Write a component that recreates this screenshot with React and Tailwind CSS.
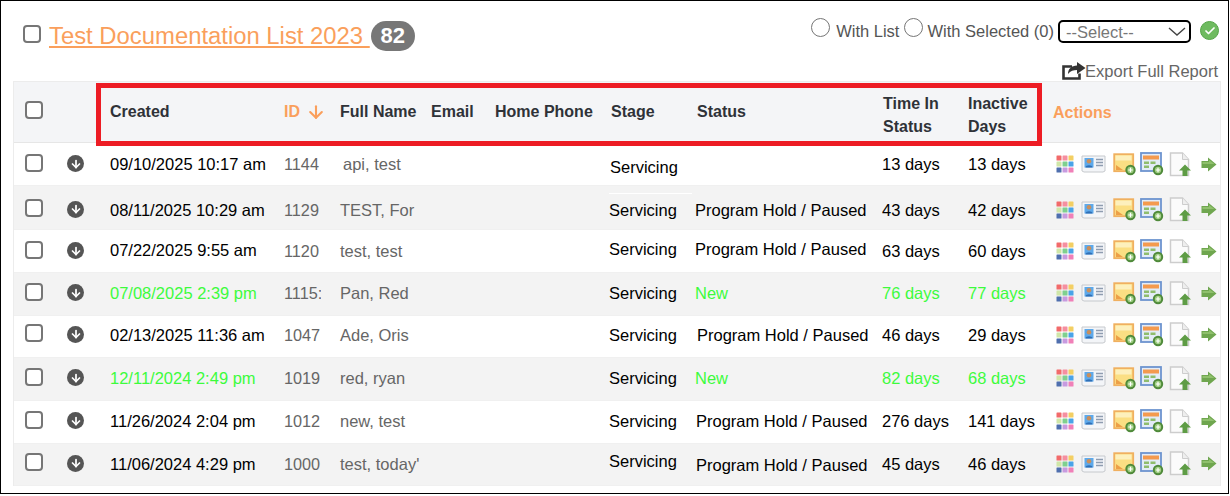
import { ArrowDown, Check } from "lucide-react";

const rows = [
  { created: "09/10/2025 10:17 am", id: "1144", name: "api, test", status: "", time: "13 days", inactive: "13 days", h: "h-[43px]", nameCls: "pl-[3px]", stageCls: "pl-px pt-[6px]" },
  { created: "08/11/2025 10:29 am", id: "1129", name: "TEST, For", status: "Program Hold / Paused", time: "43 days", inactive: "42 days", h: "h-[44px] pt-[4px]", alt: true, mark: true },
  { created: "07/22/2025 9:55 am", id: "1120", name: "test, test", status: "Program Hold / Paused", time: "63 days", inactive: "60 days", h: "h-[43px]", statusCls: "pb-[4px]", stageCls: "pb-[4px]", dateCls: "pb-[2px]" },
  { created: "07/08/2025 2:39 pm", id: "1115:", name: "Pan, Red", status: "New", time: "76 days", inactive: "77 days", h: "h-[43px] pb-[2px]", alt: true, green: true },
  { created: "02/13/2025 11:36 am", id: "1047", name: "Ade, Oris", status: "Program Hold / Paused", time: "46 days", inactive: "29 days", h: "h-[42px] pb-[4px]", statusCls: "pl-[2px]" },
  { created: "12/11/2024 2:49 pm", id: "1019", name: "red, ryan", status: "New", time: "82 days", inactive: "68 days", h: "h-[43px] pb-[2px]", alt: true, green: true },
  { created: "11/26/2024 2:04 pm", id: "1012", name: "new, test", status: "Program Hold / Paused", time: "276 days", inactive: "141 days", h: "h-[43px] pb-[2px]", statusCls: "pl-px" },
  { created: "11/06/2024 4:29 pm", id: "1000", name: "test, today'", status: "Program Hold / Paused", time: "45 days", inactive: "46 days", h: "h-[42px] pb-[2px]", alt: true, statusCls: "pl-px pt-[2px]", stageCls: "pb-[6px]" },
];

function Box({ className = "" }) {
  return <span className={`block h-[18px] w-[18px] rounded-[4px] border-2 border-[#767676] bg-white ${className}`} />;
}

function Radio() {
  return <span className="block h-[19px] w-[19px] rounded-full border-[1.5px] border-[#767676] bg-white" />;
}

function ColorGrid() {
  const colors = ["#f26a6a", "#f58fa0", "#f3cf63", "#cfe6a8", "#7fd08f", "#4aa3e8", "#4f6fae", "#c79be0", "#f080b8"];
  return (
    <svg width="18" height="18" viewBox="0 0 18 18" className="blur-[0.4px]">
      {colors.map((c, i) => (
        <rect key={c} x={0.5 + (i % 3) * 6} y={0.5 + Math.floor(i / 3) * 6} width="5" height="5" rx="0.6" fill={c} />
      ))}
    </svg>
  );
}

function IdCard() {
  return (
    <svg width="25" height="18" viewBox="0 0 25 18" className="blur-[0.4px]">
      <path d="M1 1h23v15l-2 1H3l-2-1z" fill="#f3f5f8" stroke="#c6c9cd" />
      <rect x="3.5" y="3" width="9" height="9.5" fill="#5ea9ea" />
      <circle cx="8" cy="6.3" r="2.3" fill="#c98f5c" />
      <path d="M4.5 12.5c0-3 7-3 7 0z" fill="#2f6fb5" />
      <path d="M15 4.5h7M15 7.5h7M15 10.5h7" stroke="#8f9db0" strokeWidth="1.4" />
    </svg>
  );
}

function PlusDot({ cx, cy }) {
  return (
    <g>
      <circle cx={cx} cy={cy} r="5.2" fill="#4f8a3a" />
      <circle cx={cx} cy={cy} r="3.2" fill="#9ccc7f" />
      <path d={`M${cx - 2.2} ${cy}h4.4M${cx} ${cy - 2.2}v4.4`} stroke="#fff" strokeWidth="1.2" />
    </g>
  );
}

function NoteAdd() {
  return (
    <svg width="24" height="23" viewBox="0 0 24 23" className="blur-[0.4px]">
      <rect x="1.2" y="1.2" width="19" height="17" fill="#fbdf83" stroke="#f0b060" strokeWidth="1.8" />
      <rect x="2.5" y="2.5" width="16" height="5" fill="#fdf0bd" />
      <path d="M3 12l7 5H3z" fill="#ec9f48" />
      <PlusDot cx={17.5} cy={17} />
    </svg>
  );
}

function TableAdd() {
  return (
    <svg width="24" height="24" viewBox="0 0 24 24" className="blur-[0.4px]">
      <rect x="1" y="1" width="20" height="18" fill="#e3ecf8" stroke="#6d94cf" strokeWidth="1.8" />
      <rect x="3" y="3.5" width="16" height="4" fill="#f49a4e" />
      <path d="M4 9.5h5v2.5H4zM10.5 9.5h5v2.5h-5zM4 13.5h5V16H4z" fill="#8fbd6d" />
      <PlusDot cx={18} cy={18} />
    </svg>
  );
}

function FileUp() {
  return (
    <svg width="23" height="25" viewBox="0 0 23 25" className="blur-[0.4px]">
      <path d="M1.5 1h12l6 6.5V23.5h-18z" fill="#fbfbfb" stroke="#cdcdcd" strokeWidth="1.5" />
      <path d="M13.5 1v6.5h6" fill="#eee" stroke="#cdcdcd" strokeWidth="1" />
      <path d="M16 12.5l6 6h-3.5v5.5h-5v-5.5H10z" fill="#5e9c45" />
    </svg>
  );
}

function GoArrow() {
  return (
    <svg width="16" height="15" viewBox="0 0 16 15" className="blur-[0.4px]">
      <path d="M0.5 4h6.5V0.5l8.5 7-8.500 7V11H0.500z" fill="#6fa64f" />
      <path d="M1.500 5h6.500V3l5.500 4H1.500z" fill="#8fc06c" />
    </svg>
  );
}

function ExportIcon() {
  return (
    <svg width="24" height="18" viewBox="0 0 24 18" className="shrink-0">
      <path d="M10 4.500H1.500v12h16v-5" fill="none" stroke="#333" strokeWidth="2.6" />
      <path d="M23.500 6L15 0v3.500C9.500 3.500 6 7 6 12c2.500-3.300 5.500-4 9-4v4z" fill="#333" />
    </svg>
  );
}

function Actions() {
  return (
    <div className="flex w-[167px] shrink-0 items-center pl-[3px]">
      <span className="w-[25px]"><ColorGrid /></span>
      <span className="w-[32px]"><IdCard /></span>
      <span className="w-[27px]"><NoteAdd /></span>
      <span className="w-[29px]"><TableAdd /></span>
      <span className="w-[32px]"><FileUp /></span>
      <GoArrow />
    </div>
  );
}

function Row({ row }) {
  const color = row.green ? "text-[#3dfb3d]" : "text-black";
  return (
    <div className={`relative flex items-center border-b border-[#f0f0f0] pl-[11px] ${row.h} ${row.alt ? "bg-[#f3f3f3]" : "bg-white"}`}>
      {row.mark && <span className="absolute left-[595px] top-[7px] h-px w-[83px] bg-white" />}
      <div className="w-[42px] shrink-0 pb-[3px]"><Box /></div>
      <div className="w-[43px] shrink-0 pb-px">
        <span className="grid h-[17px] w-[17px] place-items-center rounded-full bg-[#555]">
          <ArrowDown size={12} strokeWidth={3.5} className="text-white" />
        </span>
      </div>
      <div className={`w-[174px] shrink-0 ${row.dateCls || ""} ${color}`}>{row.created}</div>
      <div className="w-[56px] shrink-0 text-[16.25px] text-[#666]">
        <span className="block w-[37px] overflow-hidden whitespace-nowrap">{row.id}</span>
      </div>
      <div className={`w-[269px] shrink-0 text-[#666] ${row.nameCls || ""}`}>{row.name}</div>
      <div className={`w-[86px] shrink-0 text-black ${row.stageCls || ""}`}>Servicing</div>
      <div className={`w-[187px] shrink-0 whitespace-nowrap ${row.statusCls || ""} ${color}`}>{row.status}</div>
      <div className={`w-[86px] shrink-0 whitespace-nowrap ${color}`}>{row.time}</div>
      <div className={`w-[85px] shrink-0 whitespace-nowrap ${color}`}>{row.inactive}</div>
      <Actions />
    </div>
  );
}

export default function App() {
  return (
    <div className="relative h-[496px] w-[1230px] overflow-hidden bg-white font-['Liberation_Sans',Arial,sans-serif] text-[16.5px] leading-5">
      <div className="h-[494px] w-[1229px] border border-black">
        <div className="flex h-[80px] justify-between pl-[22px] pr-[9px]">
          <div className="flex h-[66px] items-center">
            <Box className="mr-[8px]" />
            <a className="mt-[4px] whitespace-pre text-[23.85px] leading-7 text-[#fa9f5c] underline decoration-[1.5px] underline-offset-[2px]">Test Documentation List 2023 </a>
            <span className="ml-px mt-[4px] grid h-[30px] w-[44px] place-items-center rounded-full bg-[#777] text-[22px] font-bold text-white">82</span>
          </div>
          <div className="flex flex-col items-end pt-[17px]">
            <div className="flex items-start text-[#555]">
              <Radio />
              <span className="ml-[6px] mt-[3px]">With List</span>
              <span className="ml-[5px]"><Radio /></span>
              <span className="ml-[4px] mt-[3px]">With Selected (0)</span>
              <div className="ml-[4px] mt-[2px] flex h-[23px] w-[133px] items-center justify-between rounded-[5px] border-2 border-black pl-[6px] pr-[3px] text-[#777]">
                --Select--
                <svg width="18" height="9" viewBox="0 0 18 9" className="text-[#444]">
                  <path d="M1 1l8 7 8-7" fill="none" stroke="currentColor" strokeWidth="1.4" />
                </svg>
              </div>
              <span className="ml-[9px] mt-[3px] grid h-[19px] w-[19px] place-items-center rounded-full border border-[#55a548] bg-[#6fbb60]">
                <Check size={12} strokeWidth={3.5} className="text-white" />
              </span>
            </div>
            <div className="mr-px mt-[18px] flex items-center text-[#666]">
              <ExportIcon />
              <span className="-ml-px">Export Full Report</span>
            </div>
          </div>
        </div>
        <div className="ml-[12px] mr-[7px] border-x border-t border-[#ececec]">
          <div className="flex h-[61px] items-center border-b border-[#e6e6e6] bg-[#f4f5f7] pl-[11px] text-[16px] text-[#2f3238]">
            <div className="w-[85px] shrink-0 pb-[4px]"><Box /></div>
            <div className="w-[174px] shrink-0 font-bold">Created</div>
            <div className="flex w-[56px] shrink-0 items-center font-bold text-[#fa9f5c]">
              ID
              <ArrowDown size={20} strokeWidth={2.5} className="ml-[6px]" />
            </div>
            <div className="w-[91px] shrink-0 font-bold">Full Name</div>
            <div className="w-[64px] shrink-0 font-bold">Email</div>
            <div className="w-[116px] shrink-0 whitespace-nowrap font-bold">Home Phone</div>
            <div className="w-[86px] shrink-0 font-bold">Stage</div>
            <div className="w-[186px] shrink-0 font-bold">Status</div>
            <div className="w-[85px] shrink-0 pt-[5px] font-bold leading-[23px]">Time In<br />Status</div>
            <div className="w-[85px] shrink-0 pt-[5px] font-bold leading-[23px]">Inactive<br />Days</div>
            <div className="pt-[2px] font-bold text-[#fa9f5c]">Actions</div>
          </div>
          {rows.map((row) => <Row key={row.id} row={row} />)}
        </div>
      </div>
      <div className="absolute left-[96px] top-[83px] h-[63px] w-[946px] border-[5px] border-[#ed1c24]" />
    </div>
  );
}
